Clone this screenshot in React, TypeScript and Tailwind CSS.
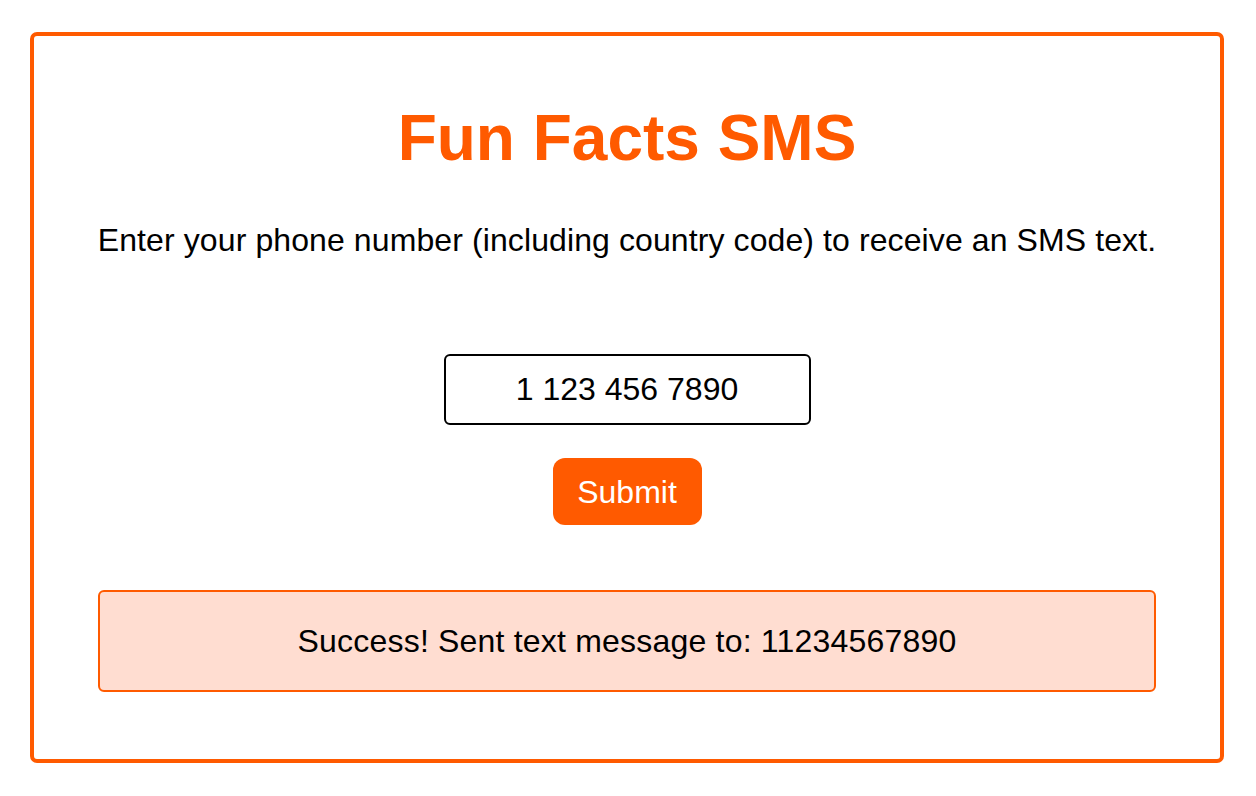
export default function App() {
  return (
    <div className="min-h-[796px] w-full bg-white pt-[32px] pl-[30px] font-['Liberation_Sans',Arial,sans-serif]">
      {/* Card */}
      <div className="w-[1194px] h-[731px] border-4 border-[#ff5a00] rounded-[7px] flex flex-col items-center">
        <h1 className="mt-[70px] text-[64px] leading-[64px] font-bold text-[#ff5a00]">
          Fun Facts SMS
        </h1>
        <p className="mt-[52px] text-[32px] leading-[36px] tracking-[0.1px] text-black">
          Enter your phone number (including country code) to receive an SMS text.
        </p>

        <input
          type="text"
          defaultValue="1 123 456 7890"
          className="mt-[96px] w-[367px] h-[71px] border-2 border-black rounded-[6px] text-center text-[32px] text-black outline-none"
        />

        <button className="mt-[33px] h-[67px] w-[149px] rounded-[12px] bg-[#ff5a00] text-white text-[32px]">
          Submit
        </button>

        <div className="mt-[65px] w-[1058px] h-[102px] border-2 border-[#ff5a00] rounded-[6px] bg-[#ffddd1] flex items-center justify-center">
          <span className="text-[32px] tracking-[0.2px] text-black">
            Success! Sent text message to: 11234567890
          </span>
        </div>
      </div>
    </div>
  );
}
